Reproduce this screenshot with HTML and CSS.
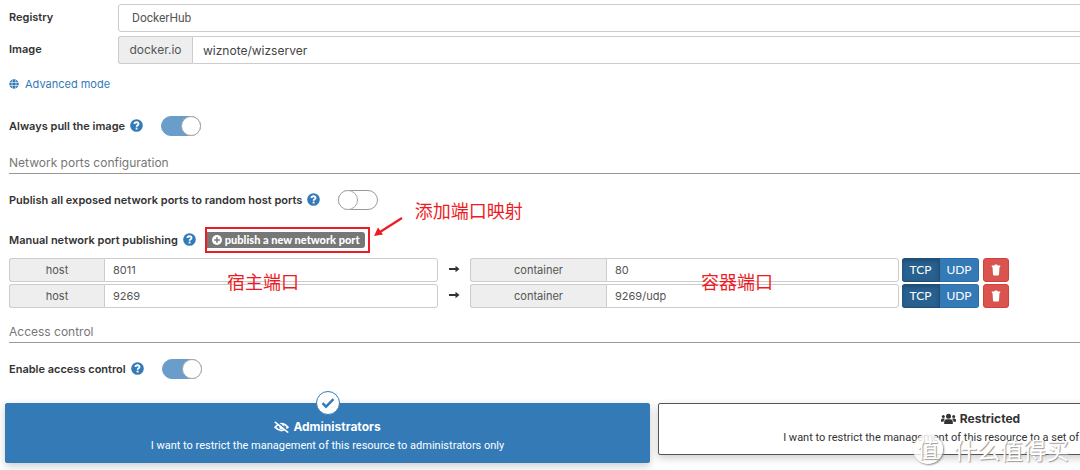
FILE: index.html
```html
<!DOCTYPE html>
<html lang="en">
<head>
<meta charset="utf-8">
<title>Create container</title>
<link rel="stylesheet" href="styles.css">
</head>
<body>
<svg class="sprite" aria-hidden="true">
  <symbol id="help" viewBox="0 0 14 14"><circle cx="7" cy="7" r="6.8" fill="currentColor"/><path d="M4.7 5.4C4.8 2.8 9.5 2.9 9.2 5.5 9 6.9 7.1 6.8 7.1 8.4" fill="none" stroke="#fff" stroke-width="1.9"/><rect x="6.1" y="9.3" width="2" height="2" fill="#fff"/></symbol>
  <symbol id="arrow" viewBox="0 0 12 8"><path d="M1 3h6.5V.7L11.5 4 7.5 7.3V5H1z" fill="currentColor"/></symbol>
  <symbol id="trash" viewBox="0 0 10 12"><path d="M.8 1.5h2.4L4 .6h2l.8.9h2.4v1.5H.8zM1.5 3h7l-.5 7.5q-.1 1-1 1H3q-.9 0-1-1z" fill="currentColor"/></symbol>
</svg>
<main class="page">
  <form class="form">
    <div class="field">
      <label class="label" for="registry">Registry</label>
      <select class="control registry" id="registry"><option>DockerHub</option></select>
    </div>
    <div class="field">
      <label class="label" for="image">Image</label>
      <div class="group">
        <span class="addon domain">docker.io</span>
        <input class="control image" id="image" type="text" value="wiznote/wizserver">
      </div>
    </div>
    <a class="advanced" href="#">
      <svg class="globe" viewBox="0 0 12 12" aria-hidden="true"><circle cx="6" cy="6" r="5.7" fill="currentColor"/><path d="M.5 4.2h11M.5 7.8h11M4.2.7Q2.8 6 4.2 11.3M7.8.7Q9.2 6 7.8 11.3" fill="none" stroke="#fff" stroke-width=".7"/></svg>
      Advanced mode
    </a>
    <div class="line pull">
      <label class="strong" for="pull">Always pull the image</label>
      <svg class="help"><use href="#help"/></svg>
      <input class="switch" id="pull" type="checkbox" checked>
    </div>
    <h2 class="heading">Network ports configuration</h2>
    <div class="line">
      <label class="strong" for="publish">Publish all exposed network ports to random host ports</label>
      <svg class="help"><use href="#help"/></svg>
      <input class="switch" id="publish" type="checkbox">
    </div>
    <div class="line manual">
      <span class="strong">Manual network port publishing</span>
      <svg class="help"><use href="#help"/></svg>
      <span class="marked">
        <button class="tag" type="button">
          <svg class="plus" viewBox="0 0 10 10" aria-hidden="true"><circle cx="5" cy="5" r="5" fill="#fff"/><path d="M5 2.2v5.6M2.2 5h5.6" stroke="#777" stroke-width="1.5"/></svg>
          publish a new network port
        </button>
        <svg class="pointer" viewBox="0 0 32 22" aria-hidden="true"><path d="M30 2 8 16" stroke="#ed1c24" stroke-width="2.2"/><path d="M2 20 6 11.5 11 18.5z" fill="#ed1c24"/></svg>
        <span class="note note-add" lang="zh">添加端口映射</span>
      </span>
    </div>
    <div class="ports">
      <div class="port">
        <div class="group"><label class="addon host" for="h1">host</label><input class="control" id="h1" type="text" value="8011"></div>
        <svg class="arrow"><use href="#arrow"/></svg>
        <div class="group"><label class="addon container" for="c1">container</label><input class="control" id="c1" type="text" value="80"></div>
        <div class="actions"><button class="proto active" type="button">TCP</button><button class="proto" type="button">UDP</button><button class="delete" type="button" aria-label="Remove"><svg><use href="#trash"/></svg></button></div>
      </div>
      <div class="port">
        <div class="group"><label class="addon host" for="h2">host</label><input class="control" id="h2" type="text" value="9269"></div>
        <svg class="arrow"><use href="#arrow"/></svg>
        <div class="group"><label class="addon container" for="c2">container</label><input class="control" id="c2" type="text" value="9269/udp"></div>
        <div class="actions"><button class="proto active" type="button">TCP</button><button class="proto" type="button">UDP</button><button class="delete" type="button" aria-label="Remove"><svg><use href="#trash"/></svg></button></div>
      </div>
      <span class="note note-host" lang="zh">宿主端口</span>
      <span class="note note-container" lang="zh">容器端口</span>
    </div>
    <h2 class="heading access">Access control</h2>
    <div class="line">
      <label class="strong" for="access">Enable access control</label>
      <svg class="help"><use href="#help"/></svg>
      <input class="switch" id="access" type="checkbox" checked>
    </div>
  </form>
  <div class="cards">
    <button class="card selected" type="button">
      <span class="check"><svg viewBox="0 0 14 12" aria-hidden="true"><path d="M1.5 6.2 5 9.7 12.5 2.2" fill="none" stroke="currentColor" stroke-width="2.4"/></svg></span>
      <span class="title">
        <svg class="glyph" viewBox="0 0 15 12" aria-hidden="true"><path d="M1 6.2Q7.5-1 14 6.2 7.5 13 1 6.2z" fill="none" stroke="currentColor" stroke-width="1.7"/><circle cx="7.8" cy="6" r="2.5" fill="currentColor"/><path d="M2 0 15 10.8" stroke="#337ab7" stroke-width="1.5"/><path d="M.8.8 14.2 11.6" stroke="currentColor" stroke-width="1.5"/></svg>
        Administrators
      </span>
      <span class="desc">I want to restrict the management of this resource to administrators only</span>
    </button>
    <button class="card" type="button">
      <span class="title">
        <svg class="glyph" viewBox="0 0 15 12" aria-hidden="true"><g fill="currentColor"><circle cx="7.5" cy="3.2" r="2.5"/><circle cx="2.3" cy="3.4" r="1.5"/><circle cx="12.7" cy="3.4" r="1.5"/><path d="M3.2 11V9q0-2.7 2.6-2.7h3.4q2.6 0 2.6 2.7v2zM0 8.8V7q0-1.5 1.5-1.5h1.8l.6.5Q2.6 6.8 2.5 8.8zM15 8.8V7q0-1.5-1.5-1.5h-1.8l-.6.5q1.3.8 1.4 2.8z"/></g></svg>
        Restricted
      </span>
      <span class="desc">I want to restrict the management of this resource to a set of users and/or teams</span>
    </button>
  </div>
  <div class="watermark" lang="zh"><span class="seal">值</span><span>什么值得买</span></div>
</main>
</body>
</html>
```
FILE: styles.css
```css
*, *::before { box-sizing: border-box; }
body { margin: 0; background: #fff; color: #333; font: 11px/20px Inter, "Noto Sans CJK SC", sans-serif; }
button, input, select { margin: 0; font: inherit; }
.sprite { position: absolute; width: 0; height: 0; }
.page { position: relative; overflow: hidden; padding-top: 4px; padding-bottom: 8px; }
.form { display: flex; flex-direction: column; padding-left: 9px; }
.field { display: flex; margin-bottom: 4px; margin-right: -8px; }
.label { flex: none; width: 109px; padding-top: 3px; font-weight: 600; }
.strong { font-weight: 600; }
.group { display: flex; flex: 1; min-width: 0; }
.control { flex: 1; min-width: 0; height: 24px; padding: 0 8px; border: 1px solid #ccc; border-radius: 0 3px 3px 0; background: #fff; color: #555; appearance: none; }
.addon { flex: none; border: 1px solid #ccc; border-right: 0; border-radius: 3px 0 0 3px; background: #eee; color: #555; text-align: center; line-height: 22px; }
.registry { height: 28px; padding: 0 13px; border-radius: 3px; font-family: Roboto, sans-serif; font-size: 12px; }
.image { height: 28px; padding: 0 10px; font-size: 12px; color: #444; }
.domain { width: 74px; font-size: 12px; line-height: 25px; }
.host { width: 95px; }
.container { width: 136px; }
.advanced { display: flex; align-items: center; align-self: flex-start; gap: 6px; margin-top: 6px; color: #337ab7; text-decoration: none; }
.globe { width: 10px; height: 10px; }
.line { display: flex; align-items: center; height: 20px; margin-top: 16px; }
.pull { margin-top: 22px; }
.manual { margin-top: 20px; }
.help { width: 13px; height: 13px; margin-left: 5px; margin-bottom: 2px; color: #337ab7; }
.switch { position: relative; width: 40px; height: 20px; margin-left: 18px; border: 1px solid #999; border-radius: 10px; background: #fff; appearance: none; }
.switch::before { content: ""; position: absolute; top: -1px; left: -1px; width: 20px; height: 20px; border: 1px solid #aaa; border-radius: 50%; background: #fff; }
.switch:checked { border-color: #6a9dca; background: #6a9dca; }
.switch:checked::before { left: 19px; }
.heading { margin: 17px 0 0; border-bottom: 1px solid #999; color: #777; font-size: 12px; line-height: 20px; font-weight: 400; }
.access { margin-top: 14px; }
.marked { position: relative; display: flex; margin-left: 9px; padding: 3px 3px 3px 0; border: 2px solid #ed1c24; }
.tag { display: flex; align-items: center; gap: 3px; height: 16px; padding: 0 5px; border: 0; border-radius: 0 3px 3px 0; background: #777; color: #fff; font: 900 11px/16px Lato, sans-serif; white-space: nowrap; }
.plus { width: 10px; height: 10px; }
.pointer { position: absolute; left: 100%; top: -13px; width: 32px; height: 22px; margin-left: 4px; }
.note { position: absolute; color: #ed1c24; font: 18px/24px "Noto Sans CJK SC", sans-serif; white-space: nowrap; }
.note-add { left: 100%; top: -31px; margin-left: 47px; }
.note-host { left: 218px; top: 11px; }
.note-container { left: 692px; top: 11px; }
.ports { position: relative; display: flex; flex-direction: column; gap: 2px; margin-top: 8px; }
.port { display: grid; grid-template-columns: 1fr 32px 1fr auto; align-items: center; padding-right: 71px; }
.arrow { width: 12px; height: 8px; margin-bottom: 2px; justify-self: center; color: #333; }
.actions { display: flex; margin-left: 3px; }
.proto { width: 39px; height: 24px; padding: 0; border: 1px solid #2e6da4; border-left: 0; border-radius: 0 3px 3px 0; background: #337ab7; color: #fff; font: 12px/20px Lato, sans-serif; }
.active { width: 38px; border-color: #204d74; border-radius: 3px 0 0 3px; background: #286090; box-shadow: inset 0 2px 4px #204d74; }
.delete { display: grid; place-items: center; width: 26px; height: 24px; margin-left: 4px; padding: 0; border: 1px solid #d43f3a; border-radius: 3px; background: #d9534f; color: #fff; }
.delete svg { width: 10px; height: 12px; }
.cards { display: grid; grid-template-columns: 60% 60%; gap: 8px; align-items: start; margin: 24px 0 0 5px; }
.card { position: relative; display: flex; flex-direction: column; align-items: center; padding: 6px 8px; border: 1px solid #555; border-radius: 2px; background: #fff; color: #333; box-shadow: 0 3px 8px #0003; white-space: nowrap; }
.selected { padding: 14px 8px 6px; border-color: #337ab7; background: #337ab7; color: #fff; }
.title { display: flex; align-items: center; gap: 4px; font-size: 12px; line-height: 18px; font-weight: 700; }
.desc { font: 11px/20px Roboto, sans-serif; }
.glyph { width: 15px; height: 12px; }
.check { position: absolute; left: 50%; top: -13px; display: grid; place-items: center; width: 24px; height: 24px; margin-left: -12px; border: 1px solid #337ab7; border-radius: 50%; background: #fff; color: #337ab7; }
.check svg { width: 14px; height: 12px; }
.watermark { position: absolute; right: 11px; bottom: 6px; display: flex; align-items: center; gap: 11px; color: #fff; font: 23px/32px "Noto Sans CJK SC", sans-serif; text-shadow: 1px 1px 1px #999; }
.seal { width: 30px; height: 30px; border-radius: 50%; background: #ffffffd0; box-shadow: 1px 1px 2px #888; text-align: center; font-size: 21px; line-height: 28px; }
```
